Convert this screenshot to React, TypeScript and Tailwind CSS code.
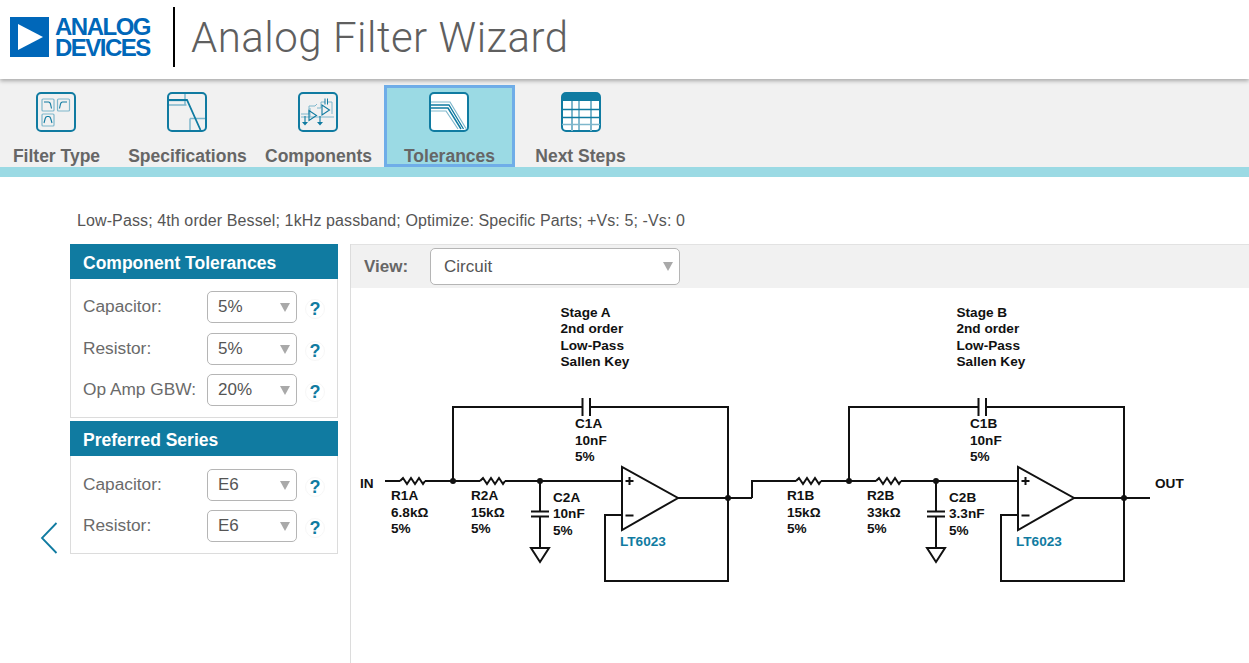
const teal = "#107ba1";
const light = "#7fb7cc";

const IconFrame = ({ children, fill = "white" }: { children: React.ReactNode; fill?: string }) => (
  <svg width="40" height="40" viewBox="0 0 40 40" fill="none">
    <rect x="1" y="1" width="38" height="38" rx="4" fill={fill} stroke={teal} strokeWidth="2" />
    {children}
  </svg>
);

const FilterTypeIcon = () => (
  <IconFrame fill="none">
    <g stroke={light} strokeWidth="1.2">
      <rect x="6" y="7" width="12" height="12" rx="1" />
      <rect x="21.5" y="7" width="12" height="12" rx="1" />
      <rect x="6" y="22" width="12" height="12" rx="1" />
    </g>
    <g stroke={teal} strokeWidth="1.1">
      <path d="M8 10h4.5q1.5 0 2 2l1 4.5" />
      <path d="M23.5 16.5l1-4.5q.5-2 2-2h4.5" />
      <path d="M8 31l1.2-4.5q.5-2 2-2h1.5q1.5 0 2 2L16 31" />
    </g>
  </IconFrame>
);

const SpecIcon = () => (
  <IconFrame fill="none">
    <path d="M2 8.500h17M2 13h17.500M18 2v11.500" stroke={light} strokeWidth="1.500" />
    <path d="M23 26.500h15M23 26.500V38" stroke={light} strokeWidth="1.500" />
    <path d="M2 8h18l13.500 30" stroke={teal} strokeWidth="1.800" />
  </IconFrame>
);

const ComponentsIcon = () => (
  <IconFrame fill="none">
    <g stroke={light} strokeWidth="1">
      <path d="M3 22h8M11 22V14h6l2-2M19 16h4M23 16v-6h4M29 10h5v12M3 25h33M12 16v9" />
      <path d="M27 6.500v6M29.500 6.500v6" stroke={teal} />
    </g>
    <g stroke={teal} strokeWidth="1.100">
      <path d="M11 18.500v10l7.500-5z" />
      <path d="M24 13v10l7.500-5z" />
      <path d="M7 24v6M22 24v6" />
    </g>
    <path d="M4 30h6l-3 3.500zM19 30h6l-3 3.500z" fill={teal} />
  </IconFrame>
);

const ToleranceIcon = () => (
  <IconFrame>
    <path d="M2 10h19l16 26.500" stroke={light} strokeWidth="1.200" />
    <path d="M2 13h18l14.500 24" stroke={teal} strokeWidth="1.300" />
    <path d="M2 16h17l13 21" stroke={teal} strokeWidth="1.500" />
    <path d="M2 19h15l12 18" stroke={light} strokeWidth="1.200" />
  </IconFrame>
);

const TableIcon = () => (
  <svg width="40" height="40" viewBox="0 0 40 40" fill="none">
    <rect x="1" y="1" width="38" height="38" rx="4" fill="white" stroke={teal} strokeWidth="2" />
    <path d="M1 5q0-4 4-4h30q4 0 4 4v4H1z" fill={teal} />
    <path d="M11 9v30M30 9v30" stroke={light} strokeWidth="2" />
    <path d="M18 9v30" stroke={teal} strokeWidth="1" />
    <path d="M1 17.500h38M1 25.500h38" stroke={teal} strokeWidth="1.300" />
    <path d="M1 32.500h38" stroke={light} strokeWidth="1.500" />
  </svg>
);

const navItems = [
  { label: "Filter Type", icon: <FilterTypeIcon />, width: "w-[113px] mr-[9px]", nudge: "mr-[1px]" },
  { label: "Specifications", icon: <SpecIcon />, width: "w-[131px]", nudge: "mr-[1px]" },
  { label: "Components", icon: <ComponentsIcon />, width: "w-[131px]", nudge: "mr-[1px]" },
  { label: "Tolerances", icon: <ToleranceIcon />, width: "w-[131px]", nudge: "mr-[1px]", active: true },
  { label: "Next Steps", icon: <TableIcon />, width: "w-[131px]", nudge: "" },
];

const Select = ({ value, className = "" }: { value: string; className?: string }) => (
  <div className={`h-8 w-[90px] shrink-0 border border-[#b5b5b5] rounded-[5px] bg-white flex items-center justify-between pl-[10px] pr-[6px] text-[17px] text-[#555] ${className}`}>
    <span>{value}</span>
    <span className="w-0 h-0 border-x-[5px] border-x-transparent border-t-[9px] border-t-[#a9a9a9]" />
  </div>
);

const Row = ({ label, value, className = "" }: { label: string; value: string; className?: string }) => (
  <div className={`flex items-center h-8 ${className}`}>
    <span className="w-[124px] text-[17.300px] text-[#6a6a6a] whitespace-nowrap">{label}</span>
    <Select value={value} />
    <span className="ml-[8px] mt-[4px] w-5 h-5 rounded-full border border-[#f7f7f7] flex items-center justify-center text-[18px] font-bold text-[#107ba1]">?</span>
  </div>
);

const Panel = ({ title, children, bodyClass }: { title: string; children: React.ReactNode; bodyClass: string }) => (
  <div>
    <div className="h-[35px] bg-[#107ba1] text-white font-bold text-[17.500px] flex items-center pl-[13px] pt-[4px]">{title}</div>
    <div className={`border border-t-0 border-[#dcdcdc] pl-[12px] ${bodyClass}`}>{children}</div>
  </div>
);

const Wire = ({ d }: { d: string }) => <path d={d} fill="none" stroke="#111" strokeWidth="2" />;

const Label = ({ x, y, lines, step = 16.500 }: { x: number; y: number; lines: string[]; step?: number }) => (
  <text x={x} y={y} fontSize="13.600" fontWeight="700" fill="#111" fontFamily="'Liberation Sans', Arial, sans-serif">
    {lines.map((line, i) => (
      <tspan key={i} x={x} y={y + i * step}>{line}</tspan>
    ))}
  </text>
);

// one Sallen Key stage, dx shifts it along the page
const Stage = ({ dx, name, r1, r2, c1, c2 }: { dx: number; name: string; r1: string; r2: string; c1: string; c2: string }) => (
  <g>
    <g transform={`translate(${dx} 0)`}>
      <Wire d="M425 481H480M505 481H622M453 481V407H582M591 407H728V581H605V515H622M678 498H752" />
      <Wire d="M400 481l3-3 4 6 4-6 4 6 4-6 4 6 2-3M480 481l3-3 4 6 4-6 4 6 4-6 4 6 2-3" />
      <Wire d="M582.500 398v18M590 398v18" />
      <Wire d="M540 481V511.500M531 511.500H549M531 516.500H549M540 516.500V548M531 548H549L540 562Z" />
      <Wire d="M622 467V530L678 498Z" />
      <Wire d="M625.500 481h8M629.500 477v8M625.500 515.500h8" />
      <circle cx="453" cy="481" r="3" fill="#111" />
      <circle cx="540" cy="481" r="3" fill="#111" />
      <circle cx="728" cy="498" r="3" fill="#111" />
    </g>
    <text x={620 + dx} y={546} fontSize="13.600" fontWeight="700" fill="#107ba1" fontFamily="'Liberation Sans', Arial, sans-serif">LT6023</text>
    <Label x={575 + dx - (dx ? 1 : 0)} y={428} lines={[`C1${name}`, c1, "5%"]} />
    <Label x={391 + dx} y={500} lines={[`R1${name}`, r1, "5%"]} />
    <Label x={471 + dx} y={500} lines={[`R2${name}`, r2, "5%"]} />
    <Label x={553 + dx} y={501.500} lines={[`C2${name}`, c2, "5%"]} />
    <Label x={560.500 + dx} y={316.500} lines={[`Stage ${name}`, "2nd order", "Low-Pass", "Sallen Key"]} />
  </g>
);

export default function App() {
  return (
    <div className="w-[1249px] h-[663px] overflow-hidden bg-white font-['Liberation_Sans',Arial,sans-serif]">
      <header className="relative z-10 h-[79px] flex items-center bg-white shadow-[0_2px_4px_rgba(0,0,0,0.3)]">
        <div className="ml-[10px] w-[39px] h-[40px] mt-[-5px] bg-[#0067b9] flex items-center justify-center">
          <span className="ml-[1px] w-0 h-0 border-y-[13px] border-y-transparent border-l-[25px] border-l-white" />
        </div>
        <div className="ml-[6px] mt-[-5px] w-[97px] text-[#0067b9] font-bold text-[24px] leading-[21px] tracking-[-1.500px] whitespace-nowrap">
          <div>ANALOG</div>
          <div>DEVICES</div>
        </div>
        <div className="ml-[21px] mt-[-5px] w-[2px] h-[60px] bg-black" />
        <h1 className="ml-[16px] mt-[-5px] font-['Roboto',sans-serif] font-light text-[42px] tracking-[0.500px] text-[#5f5f5f] whitespace-nowrap">Analog Filter Wizard</h1>
      </header>

      <nav className="h-[88px] bg-[#f1f1f1] flex items-end">
        {navItems.map((item) => (
          <div
            key={item.label}
            className={`${item.width} h-[82px] flex flex-col items-center pt-[7px] ${
              item.active ? "bg-[#9bdae4] border-[3px] border-[#6fade8] !pt-[4px]" : ""
            }`}
          >
            <div className={`h-10 ${item.nudge}`}>{item.icon}</div>
            <span className="mt-[11px] font-bold text-[17.500px] text-[#666] whitespace-nowrap">{item.label}</span>
          </div>
        ))}
      </nav>
      <div className="h-[10px] bg-[#9bdae4]" />

      <p className="pl-[77px] pt-[32px] h-[67px] text-[16px] tracking-[0.110px] text-[#555]">
        Low-Pass; 4th order Bessel; 1kHz passband; Optimize: Specific Parts; +Vs: 5; -Vs: 0
      </p>

      <div className="flex">
        <div className="w-[70px] shrink-0 pl-[40px] pt-[278px]">
          <svg width="18" height="32" viewBox="0 0 18 32" fill="none">
            <path d="M16.500 1L2 16l14.500 15" stroke="#107ba1" strokeWidth="1.800" />
          </svg>
        </div>

        <div className="w-[268px] shrink-0 flex flex-col gap-[3px]">
          <Panel title="Component Tolerances" bodyClass="h-[139px] pt-[12px]">
            <Row label="Capacitor:" value="5%" />
            <Row label="Resistor:" value="5%" className="mt-[10px]" />
            <Row label="Op Amp GBW:" value="20%" className="mt-[9px]" />
          </Panel>
          <Panel title="Preferred Series" bodyClass="h-[98px] pt-[13px]">
            <Row label="Capacitor:" value="E6" />
            <Row label="Resistor:" value="E6" className="mt-[9px]" />
          </Panel>
        </div>

        <main className="ml-[12px] flex-1 h-[419px] border-l border-[#dcdcdc]">
          <div className="h-[44px] bg-[#f1f1f1] border-t border-[#e2e2e2] flex items-center pl-[13px]">
            <span className="w-[66px] font-bold text-[17px] text-[#666]">View:</span>
            <div className="w-[250px] h-[37px] border border-[#b5b5b5] rounded-[5px] bg-white flex items-center justify-between pl-[13px] pr-[6px] text-[17px] text-[#555]">
              <span>Circuit</span>
              <span className="w-0 h-0 border-x-[5px] border-x-transparent border-t-[9px] border-t-[#a9a9a9]" />
            </div>
          </div>
          <svg width="898" height="375" viewBox="351 288 898 375" className="block">
            <Stage dx={0} name="A" r1="6.8kΩ" r2="15kΩ" c1="10nF" c2="10nF" />
            <Stage dx={396} name="B" r1="15kΩ" r2="33kΩ" c1="10nF" c2="3.3nF" />
            <Wire d="M385 481H400M752 498V481H796M1124 498H1150" />
            <Label x={360} y={488} lines={["IN"]} />
            <Label x={1155} y={488} lines={["OUT"]} />
          </svg>
        </main>
      </div>
    </div>
  );
}
